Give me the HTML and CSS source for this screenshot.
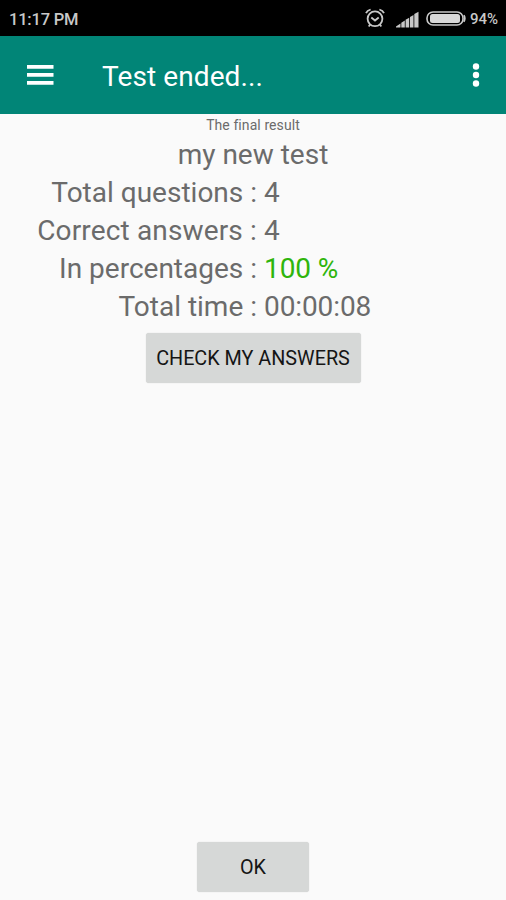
FILE: index.html
```html
<!DOCTYPE html>
<html lang="en">
<head>
    <meta charset="UTF-8">
    <title>Test ended...</title>
    <link rel="stylesheet" href="styles.css">
</head>
<body>
    <div class="status-bar">
        <span class="clock">11:17 PM</span>
        <svg class="alarm" width="20" height="20" viewBox="0 0 20 20" fill="none" stroke="#c8c8c8" stroke-width="1.8">
            <circle cx="10" cy="10.800" r="7.400"/>
            <path d="M6.300 9.500l3.700 3 3.700-3M1 5.200Q2.200 2.400 5.600 1.500M19 5.200Q17.800 2.400 14.400 1.500M5.200 16.500l-1.500 2M14.800 16.500l1.500 2"/>
        </svg>
        <svg class="signal" width="23" height="17" viewBox="0 0 23 17" fill="#c8c8c8">
            <path d="M0 16.500v-1l4.500-3v4zM5.300 16.500v-4.800l3.500-2.200v7zM9.600 16.500V8.800l3.600-2v9.700zM14 16.500V6l3.500-2v12.500zM18.300 16.500V3L22.500 .8v15.700z"/>
        </svg>
        <svg class="battery" width="40" height="15" viewBox="0 0 40 15">
            <rect x="1" y="1" width="36" height="13" rx="6" fill="none" stroke="#c8c8c8" stroke-width="1.600"/>
            <rect x="4" y="3" width="30" height="9" rx="2.500" fill="#d8d8d8"/>
            <path d="M37.800 4.300q2 3.200 0 6.400" fill="none" stroke="#c8c8c8" stroke-width="1.800"/>
        </svg>
        <span class="percent">94%</span>
    </div>
    <header class="toolbar">
        <svg class="menu" width="27" height="20" viewBox="0 0 27 20" fill="#fff">
            <path d="M0 0h26.500v3.800H0zM0 8h26.500v3.800H0zM0 16h26.500v3.800H0z"/>
        </svg>
        <h1>Test ended...</h1>
        <svg class="more" width="8" height="24" viewBox="0 0 8 24" fill="#fff">
            <circle cx="4" cy="3.500" r="3.200"/>
            <circle cx="4" cy="12" r="3.200"/>
            <circle cx="4" cy="20.500" r="3.200"/>
        </svg>
    </header>
    <main>
        <div class="caption">The final result</div>
        <div class="test-name">my new test</div>
        <div class="results">
            <span class="label">Total questions :</span>
            <span class="value">4</span>
            <span class="label correct">Correct answers :</span>
            <span class="value">4</span>
            <span class="label">In percentages :</span>
            <span class="value green">100 %</span>
            <span class="label">Total time :</span>
            <span class="value">00:00:08</span>
        </div>
        <button class="check">CHECK MY ANSWERS</button>
        <button class="ok">OK</button>
    </main>
</body>
</html>
```

FILE: styles.css
```css
body {
    font-family: Roboto, sans-serif;
    background-color: #fafafa;
    color: #6b6b6b;
    margin: 0;
    height: 100vh;
    display: flex;
    flex-direction: column;
}

.status-bar {
    display: flex;
    align-items: center;
    box-sizing: border-box;
    height: 36px;
    padding: 0 8px 0 9px;
    background-color: #000;
    color: #c8c8c8;
    font-weight: 500;
}

.clock {
    flex: 1;
    font-size: 16.5px;
    letter-spacing: -0.2px;
    padding-top: 2px;
}

.signal {
    margin-left: 11px;
    margin-top: 2px;
}

.battery {
    margin-left: 7px;
}

.percent {
    margin-left: 4px;
    font-size: 15px;
    padding-top: 1px;
}

.toolbar {
    display: flex;
    align-items: center;
    box-sizing: border-box;
    height: 78px;
    padding: 0 26px 0 27px;
    background-color: #018577;
    color: #fff;
}

.menu {
    margin-top: -1px;
}

.toolbar h1 {
    flex: 1;
    margin: 3px 0 0 48px;
    font-size: 28px;
    font-weight: 400;
    letter-spacing: 0.1px;
}

main {
    flex: 1;
    display: flex;
    flex-direction: column;
    align-items: center;
    padding-bottom: 8px;
}

.caption {
    font-size: 14px;
    line-height: 22px;
    letter-spacing: 0.08px;
}

.test-name {
    font-size: 28px;
    line-height: 38px;
}

.results {
    display: grid;
    grid-template-columns: 257px 1fr;
    column-gap: 7px;
    width: 100%;
    font-size: 28px;
    line-height: 38px;
}

.label {
    text-align: right;
}

.correct {
    letter-spacing: 0.15px;
}

.value {
    letter-spacing: -0.1px;
}

.green {
    color: #2eb50c;
}

button {
    height: 50px;
    padding: 0;
    background-color: #d6d8d7;
    border: none;
    border-radius: 3px;
    box-shadow: 0 0 1px #c8caca;
    color: #151515;
    font-family: inherit;
    font-size: 19.8px;
}

.check {
    width: 215px;
    margin-top: 7px;
}

.ok {
    width: 112px;
    margin-top: auto;
}
```
